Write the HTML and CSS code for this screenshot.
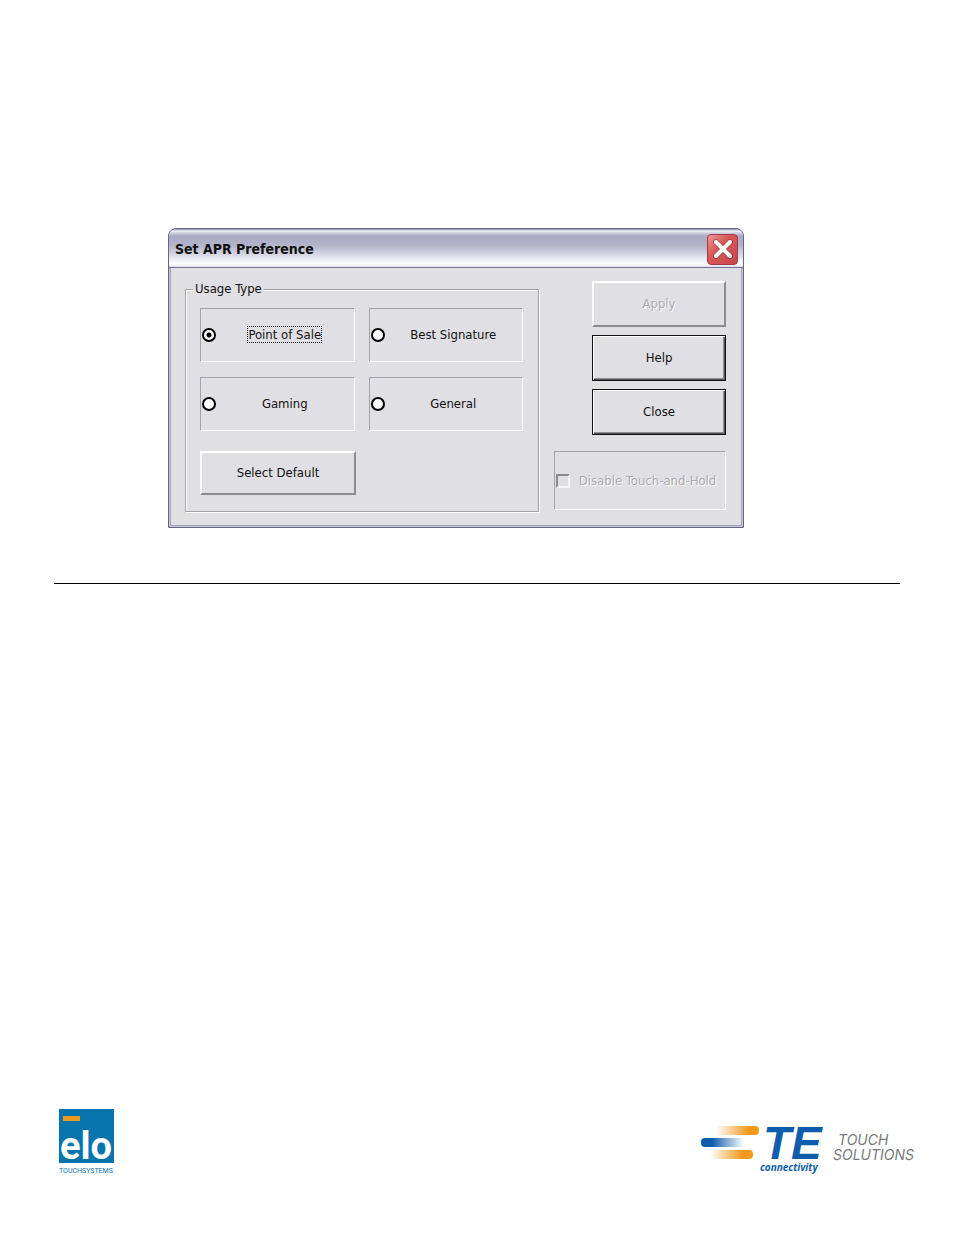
FILE: index.html
```html
<!DOCTYPE html>
<html lang="en">
<head>
    <meta charset="UTF-8">
    <meta name="viewport" content="width=device-width, initial-scale=1.0">
    <title>Set APR Preference</title>
    <link rel="stylesheet" href="styles.css">
</head>
<body>
    <main>
        <form class="dialog">
            <div class="title-bar">
                <h1>Set APR Preference</h1>
                <button type="button" class="close-button" aria-label="Close window">
                    <svg width="20" height="20" viewBox="0 0 20 20" stroke-linecap="round">
                        <path d="M3 3 L17 17 M17 3 L3 17" stroke="#8d2f35" stroke-width="6" opacity="0.5"/>
                        <path d="M3 3 L17 17 M17 3 L3 17" stroke="#fff" stroke-width="4"/>
                    </svg>
                </button>
            </div>
            <div class="dialog-body">
                <fieldset>
                    <legend>Usage Type</legend>
                    <div class="options">
                        <label class="option"><input type="radio" name="usage" checked><span><b class="focused">Point of Sale</b></span></label>
                        <label class="option"><input type="radio" name="usage"><span>Best Signature</span></label>
                        <label class="option"><input type="radio" name="usage"><span>Gaming</span></label>
                        <label class="option"><input type="radio" name="usage"><span>General</span></label>
                    </div>
                    <button type="button" class="button default-button">Select Default</button>
                </fieldset>
                <div class="side">
                    <button type="button" class="button" disabled>Apply</button>
                    <button type="button" class="button outlined">Help</button>
                    <button type="button" class="button outlined">Close</button>
                    <label class="option touch-hold"><input type="checkbox" disabled><span>Disable Touch-and-Hold</span></label>
                </div>
            </div>
        </form>
        <hr>
    </main>
    <footer>
        <svg class="elo-logo" width="60" height="68" viewBox="0 0 60 68" role="img" aria-label="elo touchsystems">
            <rect width="55" height="54" fill="#0874ae"/>
            <rect x="4" y="7" width="17" height="5" fill="#ee9a20"/>
            <text x="1" y="50" class="elo-name">elo</text>
            <text x="0" y="64" class="elo-sub">TOUCHSYSTEMS</text>
        </svg>
        <svg class="te-logo" width="216" height="56" viewBox="0 0 216 56" role="img" aria-label="TE connectivity touch solutions">
            <defs>
                <linearGradient id="orange">
                    <stop offset="0" stop-color="#f39a1d" stop-opacity="0"/>
                    <stop offset="0.75" stop-color="#f39a1d"/>
                </linearGradient>
                <linearGradient id="blue">
                    <stop offset="0.25" stop-color="#0e5cab"/>
                    <stop offset="1" stop-color="#0e5cab" stop-opacity="0"/>
                </linearGradient>
            </defs>
            <rect x="16" y="5" width="43" height="9" rx="4" fill="url(#orange)"/>
            <rect x="1" y="17" width="43" height="9" rx="4" fill="url(#blue)"/>
            <rect x="10" y="29" width="43" height="9" rx="4" fill="url(#orange)"/>
            <text x="63" y="38" class="te-name">TE</text>
            <text x="60" y="50" class="te-sub">connectivity</text>
            <text x="138" y="24" class="te-tag">TOUCH</text>
            <text x="133" y="39" class="te-tag">SOLUTIONS</text>
        </svg>
    </footer>
</body>
</html>
```

FILE: styles.css
```css
* {
    box-sizing: border-box;
}
body {
    margin: 0;
    padding: 228px 54px 58px;
    min-height: 100vh;
    display: flex;
    flex-direction: column;
    justify-content: space-between;
    background-color: #fff;
    font-family: "DejaVu Sans Condensed", "DejaVu Sans", sans-serif;
    font-size: 13px;
    line-height: 16px;
    color: #111;
}
hr {
    margin: 55px 0 0;
    border: 0;
    border-top: 1px solid #000;
}

/* dialog window */
.dialog {
    width: 100%;
    max-width: 576px;
    margin-left: 114px;
    background-color: #e0dfe3;
    border: 1px solid #66657f;
    border-radius: 8px 8px 0 0;
    box-shadow: inset 0 0 0 1px #c6c5d6, inset 0 0 0 2px #a3a2b8;
    overflow: hidden;
}
.title-bar {
    display: flex;
    align-items: center;
    justify-content: space-between;
    height: 39px;
    padding: 2px 5px 0 6px;
    border-bottom: 1px solid #77769a;
    background: linear-gradient(#8d8ca5 0, #f2f2f7 2px, #d0d0de 4px, #a9a9c3 7px, #b5b5cc 17px, #d8d8e5 26px, #fff 35px, #dcdce6 38px);
}
h1 {
    margin: 0;
    font-size: 14px;
    line-height: 16px;
}
.close-button {
    display: flex;
    align-items: center;
    justify-content: center;
    width: 31px;
    height: 31px;
    padding: 0;
    border: 1px solid #a03a48;
    border-radius: 4px;
    background: linear-gradient(135deg, #ee9a90, #d9575a 40%, #c7474d);
}
.dialog-body {
    display: flex;
    justify-content: space-between;
    gap: 15px;
    padding: 13px 17px 15px 16px;
}

/* groups and options */
fieldset {
    flex: 1;
    margin: 0;
    padding: 11px 15px 16px 14px;
    border: 1px solid #a3a2a8;
    box-shadow: 1px 1px #fff, inset 1px 1px #fff;
}
legend {
    margin-left: -7px;
    padding: 0 2px;
    background-color: #e0dfe3;
}
.options {
    display: grid;
    grid-template-columns: 1fr 1fr;
    gap: 15px 14px;
}
.option {
    display: flex;
    align-items: center;
    height: 54px;
    padding-left: 1px;
    border: 1px solid;
    border-color: #a3a2a8 #fff #fff #a3a2a8;
}
.option span {
    flex: 1;
    text-align: center;
}
.focused {
    font-weight: normal;
    outline: 1px dotted #111;
}
input {
    appearance: none;
    flex: none;
    width: 14px;
    height: 14px;
    margin: 0;
}
input[type="radio"] {
    border: 2px solid #000;
    border-radius: 50%;
    background-color: #fff;
}
input[type="radio"]:checked {
    background: radial-gradient(circle, #000 2px, #fff 3px);
}
input[type="checkbox"] {
    border: 2px solid;
    border-color: #8a898e #f5f5f7 #f5f5f7 #8a898e;
}

/* buttons */
.button {
    height: 46px;
    padding: 0;
    border: 2px solid;
    border-color: #fff #8c8b90 #8c8b90 #fff;
    background-color: #e0dfe3;
    font: inherit;
    color: inherit;
}
.button:disabled,
.touch-hold {
    color: #aaa9ae;
    text-shadow: 1px 1px #fff;
}
.outlined {
    border: 1px solid #111;
    box-shadow: inset 1px 1px #fff, inset -1px -1px #555, inset -2px -2px #8c8b90;
}
.default-button {
    display: block;
    width: 156px;
    height: 44px;
    margin-top: 20px;
}
.side {
    display: flex;
    flex-direction: column;
    gap: 8px;
    width: 172px;
}
.side .button {
    width: 134px;
    align-self: flex-end;
}
.touch-hold {
    height: 59px;
    margin-top: 8px;
}

/* logos */
footer {
    display: flex;
    align-items: flex-end;
    justify-content: space-between;
    padding-left: 5px;
}
footer svg {
    display: block;
}
.te-logo {
    margin-right: -16px;
}
.elo-name {
    font: bold 38px Roboto, sans-serif;
    fill: #fff;
}
.elo-sub {
    font: 7px Roboto, sans-serif;
    fill: #0874ae;
}
.te-name {
    font: italic bold 46px "Liberation Sans", sans-serif;
    fill: #0e5cab;
}
.te-sub {
    font: italic bold 10px "Open Sans", sans-serif;
    fill: #0e5cab;
}
.te-tag {
    font: italic 14px Inter, sans-serif;
    fill: #77787b;
}
```
